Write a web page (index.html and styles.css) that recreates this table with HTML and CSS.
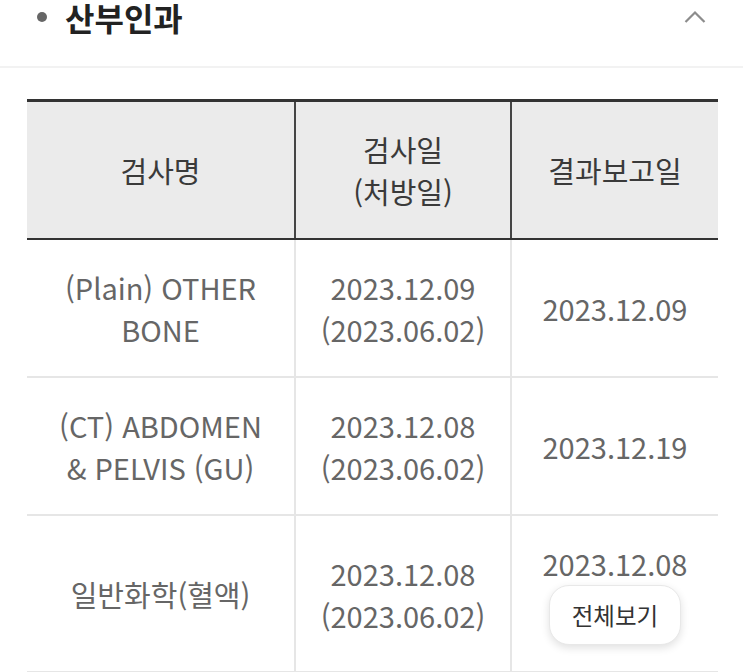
FILE: index.html
```html
<!DOCTYPE html>
<html lang="ko">
<head>
<meta charset="utf-8">
<link rel="stylesheet" href="styles.css">
</head>
<body>
<header class="section-head">
  <span class="dot"></span>
  <h2 class="title">산부인과</h2>
  <svg class="chev" width="24" height="14" viewBox="0 0 24 14"><path d="M2.5 12 L12 2.5 L21.5 12" fill="none" stroke="#8c8c8c" stroke-width="2.2"/></svg>
</header>
<div class="wrap">
  <table class="tbl">
    <colgroup><col class="c1"><col class="c2"><col class="c3"></colgroup>
    <thead>
      <tr><th>검사명</th><th>검사일<br>(처방일)</th><th>결과보고일</th></tr>
    </thead>
    <tbody>
      <tr><td>(Plain) OTHER<br>BONE</td><td>2023.12.09<br>(2023.06.02)</td><td>2023.12.09</td></tr>
      <tr><td>(CT) ABDOMEN<br>&amp; PELVIS (GU)</td><td>2023.12.08<br>(2023.06.02)</td><td>2023.12.19</td></tr>
      <tr><td>일반화학(혈액)</td><td>2023.12.08<br>(2023.06.02)</td><td><div>2023.12.08</div><button class="more">전체보기</button></td></tr>
    </tbody>
  </table>
</div>
</body>
</html>
```

FILE: styles.css
```css
html, body { margin: 0; padding: 0; background: #fff; }
body { font-family: "Noto Sans CJK KR", "Noto Sans", sans-serif; width: 743px; height: 672px; overflow: hidden; }
.section-head { display: flex; align-items: center; height: 68px; box-sizing: border-box; padding: 0 36px 32px 37px; border-bottom: 2px solid #f2f2f2; }
.dot { width: 10px; height: 10px; border-radius: 50%; background: #666; margin-right: 18px; }
.title { margin: 0; font-size: 32px; font-weight: 700; color: #222; line-height: 36px; }
.chev { margin-left: auto; }
.wrap { padding: 31px 0 0 27px; }
.tbl { border-collapse: collapse; width: 691px; table-layout: fixed; border-top: 3px solid #333; }
.tbl col.c1 { width: 268px; }
.tbl col.c2 { width: 216px; }
.tbl col.c3 { width: 207px; }
.tbl th { background: #ebebeb; font-weight: 400; color: #3a3a3a; font-size: 29px; line-height: 42px; height: 136px; border-left: 2px solid #444; border-bottom: 2px solid #333; padding: 0; }
.tbl th:first-child { border-left: none; }
.tbl td { text-align: center; font-size: 29px; line-height: 42px; color: #666; border-left: 2px solid #e6e6e6; border-bottom: 2px solid #e6e6e6; padding: 26px 0; }
.tbl td:first-child { border-left: none; }
.more { display: block; margin: 1px auto 0; width: 132px; height: 60px; border-radius: 20px; background: #fff; border: 1px solid #e8e8e8; box-shadow: 0 3px 8px rgba(0,0,0,0.12); font-family: inherit; font-size: 23.5px; line-height: 30px; color: #333; padding: 0; }
```
